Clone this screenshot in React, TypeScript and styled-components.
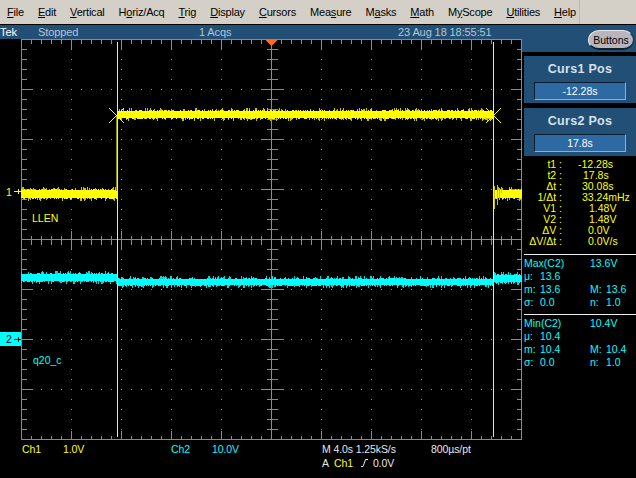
import styled, { createGlobalStyle } from "styled-components";

const YELLOW = "#ffff00";
const CYAN = "#00ffff";
const GRID = "#8e8e76";

const GlobalStyle = createGlobalStyle`
  html, body {
    margin: 0;
    padding: 0;
    background: #000;
  }
  body {
    width: 636px;
    height: 478px;
    overflow: hidden;
    font-family: "Liberation Sans", Arial, sans-serif;
  }
`;

const Screen = styled.div`
  width: 636px;
  height: 478px;
  display: flex;
  flex-direction: column;
  background: #000;
`;

const MenuBar = styled.nav`
  height: 24px;
  flex: none;
  display: flex;
  align-items: center;
  background: #d4d0c8;
  color: #000;
  font-size: 11px;
  letter-spacing: -0.2px;
  border-bottom: 1px solid #000;
`;

const MenuItems = styled.div`
  width: 580px;
  height: 100%;
  box-sizing: border-box;
  padding-left: 7px;
  display: flex;
  align-items: center;
  gap: 14px;
  border-right: 1px solid #bdb9b1;
`;

const Main = styled.div`
  flex: 1;
  display: flex;
  min-height: 0;
`;

const ScopeColumn = styled.div`
  width: 524px;
  flex: none;
  display: flex;
  flex-direction: column;
`;

const StatusBar = styled.div`
  height: 14px;
  flex: none;
  display: grid;
  grid-template-columns: 38px 161px 199px 1fr;
  align-items: center;
  background: #224f75;
  color: #b6c6d6;
  font-size: 11px;
  letter-spacing: -0.1px;
`;

const Tek = styled.span`
  color: #fff;
`;

const Graticule = styled.svg`
  display: block;
  width: 524px;
  height: 401px;
  flex: none;
`;

const TraceLabel = styled.text<{ $color: string }>`
  fill: ${(p) => p.$color};
  font-size: 10.5px;
`;

const Footer = styled.div`
  flex: 1;
  display: grid;
  grid-template-columns: 41px 108px 41px 110px 109px 1fr;
  grid-auto-rows: 13px;
  padding: 3px 0 0 22px;
  font-size: 10.5px;
  letter-spacing: -0.1px;
  color: #e8e8e8;
`;

const FooterCell = styled.span<{ $color?: string }>`
  color: ${(p) => p.$color ?? "inherit"};
`;

const TriggerRow = styled.div`
  grid-column: 5 / span 2;
  display: flex;
  align-items: center;
`;

const TriggerSource = styled.span`
  color: ${YELLOW};
  margin: 0 8px 0 5px;
`;

const TriggerLevel = styled.span`
  margin-left: 5px;
`;

const SideColumn = styled.aside`
  flex: 1;
  display: flex;
  flex-direction: column;
`;

const ButtonsBar = styled.div`
  height: 27px;
  flex: none;
  margin-left: -2px;
  box-sizing: border-box;
  padding: 5px 2px 0 0;
  display: flex;
  justify-content: flex-end;
  align-items: flex-start;
  background: #224f75;
`;

const PillButton = styled.button`
  width: 46px;
  height: 20px;
  padding: 0;
  border: 1px solid #e8e8e8;
  border-right-color: #20303c;
  border-bottom: 2px solid #10202c;
  border-radius: 11px / 10px;
  background: #b8b6bc;
  color: #000;
  font-family: inherit;
  font-size: 10.5px;
`;

const CursorPanel = styled.section<{ $height: number }>`
  height: ${(p) => p.$height}px;
  flex: none;
  box-sizing: border-box;
  margin-top: ${(p) => (p.$height === 47 ? 4 : 5)}px;
  display: flex;
  flex-direction: column;
  align-items: center;
  background: #224f75;
`;

const PanelTitle = styled.div`
  margin-top: 5px;
  height: 17px;
  line-height: 17px;
  color: #d8e0e8;
  font-size: 12.5px;
  font-weight: bold;
  letter-spacing: 0.3px;
`;

const PanelValue = styled.div`
  margin-top: 4px;
  width: 92px;
  height: 18px;
  box-sizing: border-box;
  border: 1px solid;
  border-color: #0c1c2c #8fb0cc #8fb0cc #0c1c2c;
  background: #2d69a3;
  color: #fff;
  font-size: 10.5px;
  line-height: 16px;
  text-align: center;
`;

const Readouts = styled.dl`
  margin: 3px 0 0 -8px;
  color: ${YELLOW};
  font-size: 10.5px;
  line-height: 11px;
`;

const ReadoutRow = styled.div`
  display: grid;
  grid-template-columns: 46px 1fr;
`;

const ReadoutName = styled.dt`
  text-align: right;
`;

const ReadoutValue = styled.dd<{ $indent: number }>`
  margin: 0;
  padding-left: ${(p) => p.$indent}px;
`;

const Measurement = styled.section<{ $first?: boolean }>`
  margin-top: ${(p) => (p.$first ? 7 : 5)}px;
  border-top: 1px solid #f0f0f0;
  padding-top: 2px;
  display: grid;
  grid-template-columns: 66px 1fr;
  grid-auto-rows: 13px;
  color: ${CYAN};
  font-size: 10.5px;
  line-height: 13px;
`;

const StatLine = styled.div`
  display: flex;
`;

const StatKey = styled.span`
  width: 16px;
  flex: none;
`;

/* small seeded generator so the noise on the traces stays the same between runs */
function makeRandom(seed: number) {
  let s = seed;
  return () => {
    s = (s * 1664525 + 1013904223) % 4294967296;
    return s / 4294967296;
  };
}

function ticksPath() {
  let d = "";
  for (let x = 21; x <= 521; x += 10) {
    const major = (x - 21) % 50 === 0;
    const len = major ? 9 : 4;
    d += `M${x} 0v${len}M${x} 400v${-len}`;
    if (x !== 271) d += `M${x} ${200 - len}v${len * 2 + 1}`;
  }
  for (let y = 0; y <= 400; y += 10) {
    const major = y % 50 === 0;
    const len = major ? 11 : 5;
    d += `M21 ${y}h${len}M521 ${y}h${-len}`;
    if (y !== 200) d += `M${271 - len} ${y}h${len * 2 + 1}`;
  }
  return d;
}

function dotsPath() {
  let d = "";
  for (let y = 50; y < 400; y += 50) {
    if (y === 200) continue;
    for (let x = 41; x < 521; x += 10) d += `M${x} ${y}h1`;
  }
  for (let x = 71; x < 521; x += 50) {
    if (x === 271) continue;
    for (let y = 10; y < 400; y += 10) d += `M${x} ${y}h1`;
  }
  return d;
}

type Segment = { from: number; to: number; top: number; bottom: number };

function bandPath(segments: Segment[], seed: number, spread: number) {
  const rnd = makeRandom(seed);
  let d = "";
  segments.forEach(({ from, to, top, bottom }) => {
    for (let x = from; x <= to; x++) {
      const up = rnd() < 0.3 ? Math.ceil(rnd() * spread) : 0;
      const down = rnd() < 0.35 ? Math.ceil(rnd() * spread) : 0;
      d += `M${x} ${top - up}V${bottom + down}`;
    }
  });
  return d;
}

const yellowSegments: Segment[] = [
  { from: 21, to: 116, top: 151, bottom: 159 },
  { from: 118, to: 492, top: 72, bottom: 79 },
  { from: 494, to: 521, top: 151, bottom: 159 },
];

const cyanSegments: Segment[] = [
  { from: 21, to: 116, top: 235, bottom: 242 },
  { from: 117, to: 492, top: 240, bottom: 246 },
  { from: 494, to: 521, top: 236, bottom: 243 },
];

const scopeTicks = ticksPath();
const scopeDots = dotsPath();
const yellowHalo = bandPath(yellowSegments, 11, 3);
const yellowCore = bandPath(yellowSegments, 29, 1);
const cyanHalo = bandPath(cyanSegments, 47, 3);
const cyanCore = bandPath(cyanSegments, 83, 1);

function ScopeDisplay() {
  return (
    <Graticule viewBox="0 39 524 401" shapeRendering="crispEdges">
      <g transform="translate(0 39)" fill="none">
        <rect x="21.5" y="0.5" width="500" height="400" stroke={GRID} />
        <path d="M21 200.5H521M271.5 0V400" stroke={GRID} />
        <path d={scopeTicks} stroke={GRID} transform="translate(0.5 0.5)" />
        <path d={scopeDots} stroke={GRID} transform="translate(0 0.5)" />

        <path d={yellowHalo} stroke="#c4c400" transform="translate(0.5 0)" />
        <path d={yellowCore} stroke={YELLOW} transform="translate(0.5 0)" />
        <path d="M494 147h1v23h-1zM497 146h1v20h-1zM499 149h1v12h-1zM501 148h1v6h-1z" fill="#c4c400" />
        <path d="M116.5 76V152" stroke="#8c8c00" />
        <path d={cyanHalo} stroke="#00d8d8" transform="translate(0.5 0)" />
        <path d={cyanCore} stroke={CYAN} transform="translate(0.5 0)" />

        <path d="M117.5 3V398M493.5 3V398" stroke={YELLOW} />
        <path
          d="M109 69L124 84M109 84L124 69M486 69L501 84M486 84L501 69"
          stroke={YELLOW}
          shapeRendering="auto"
        />

        <path d="M265 1H277L271 7Z" fill="#ff6a20" />

        <path d="M14 152.5H21M18 150V155" stroke={YELLOW} />
        <TraceLabel x="6" y="157" $color={YELLOW}>1</TraceLabel>
        <TraceLabel x="32" y="183" $color={YELLOW}>LLEN</TraceLabel>

        <rect x="0" y="293" width="21" height="14" fill={CYAN} />
        <TraceLabel x="6" y="304" $color="#000">2</TraceLabel>
        <path d="M14 300.5H21M18 298V303" stroke="#000" />
        <TraceLabel x="33" y="325" $color={CYAN}>q20_c</TraceLabel>
      </g>
    </Graticule>
  );
}

const menu: [string, string, string][] = [
  ["", "F", "ile"],
  ["", "E", "dit"],
  ["", "V", "ertical"],
  ["H", "o", "riz/Acq"],
  ["", "T", "rig"],
  ["", "D", "isplay"],
  ["", "C", "ursors"],
  ["Mea", "s", "ure"],
  ["M", "a", "sks"],
  ["", "M", "ath"],
  ["M", "y", "Scope"],
  ["", "U", "tilities"],
  ["", "H", "elp"],
];

const readouts: [string, string, number][] = [
  ["t1 :", "-12.28s", 16],
  ["t2 :", "17.8s", 21],
  ["Δt :", "30.08s", 20],
  ["1/Δt :", "33.24mHz", 20],
  ["V1 :", "1.48V", 27],
  ["V2 :", "1.48V", 27],
  ["ΔV :", "0.0V", 26],
  ["ΔV/Δt :", "0.0V/s", 26],
];

const measurements = [
  { title: "Max(C2)", peak: "13.6V", value: "13.6" },
  { title: "Min(C2)", peak: "10.4V", value: "10.4" },
];

function Stat({ name, value }: { name: string; value: string }) {
  return (
    <StatLine>
      <StatKey>{name}</StatKey>
      <span>{value}</span>
    </StatLine>
  );
}

export default function App() {
  return (
    <Screen>
      <GlobalStyle />
      <MenuBar>
        <MenuItems>
          {menu.map(([before, key, after]) => (
            <span key={before + key + after}>
              {before}
              <u>{key}</u>
              {after}
            </span>
          ))}
        </MenuItems>
      </MenuBar>
      <Main>
        <ScopeColumn>
          <StatusBar>
            <Tek>Tek</Tek>
            <span>Stopped</span>
            <span>1 Acqs</span>
            <span>23 Aug 18 18:55:51</span>
          </StatusBar>
          <ScopeDisplay />
          <Footer>
            <FooterCell $color={YELLOW}>Ch1</FooterCell>
            <FooterCell $color={YELLOW}>1.0V</FooterCell>
            <FooterCell $color={CYAN}>Ch2</FooterCell>
            <FooterCell $color={CYAN}>10.0V</FooterCell>
            <FooterCell>M 4.0s 1.25kS/s</FooterCell>
            <FooterCell>800µs/pt</FooterCell>
            <TriggerRow>
              A
              <TriggerSource>Ch1</TriggerSource>
              <svg width="7" height="9" viewBox="0 0 7 9">
                <path d="M0 8.5H2L4.5 1.5H7" fill="none" stroke="#e8e8e8" />
              </svg>
              <TriggerLevel>0.0V</TriggerLevel>
            </TriggerRow>
          </Footer>
        </ScopeColumn>
        <SideColumn>
          <ButtonsBar>
            <PillButton>Buttons</PillButton>
          </ButtonsBar>
          <CursorPanel $height={47}>
            <PanelTitle>Curs1 Pos</PanelTitle>
            <PanelValue>-12.28s</PanelValue>
          </CursorPanel>
          <CursorPanel $height={48}>
            <PanelTitle>Curs2 Pos</PanelTitle>
            <PanelValue>17.8s</PanelValue>
          </CursorPanel>
          <Readouts>
            {readouts.map(([name, value, indent]) => (
              <ReadoutRow key={name}>
                <ReadoutName>{name}</ReadoutName>
                <ReadoutValue $indent={indent}>{value}</ReadoutValue>
              </ReadoutRow>
            ))}
          </Readouts>
          {measurements.map((m, i) => (
            <Measurement key={m.title} $first={i === 0}>
              <span>{m.title}</span>
              <span>{m.peak}</span>
              <Stat name="μ:" value={m.value} />
              <span />
              <Stat name="m:" value={m.value} />
              <Stat name="M:" value={m.value} />
              <Stat name="σ:" value="0.0" />
              <Stat name="n:" value="1.0" />
            </Measurement>
          ))}
        </SideColumn>
      </Main>
    </Screen>
  );
}
